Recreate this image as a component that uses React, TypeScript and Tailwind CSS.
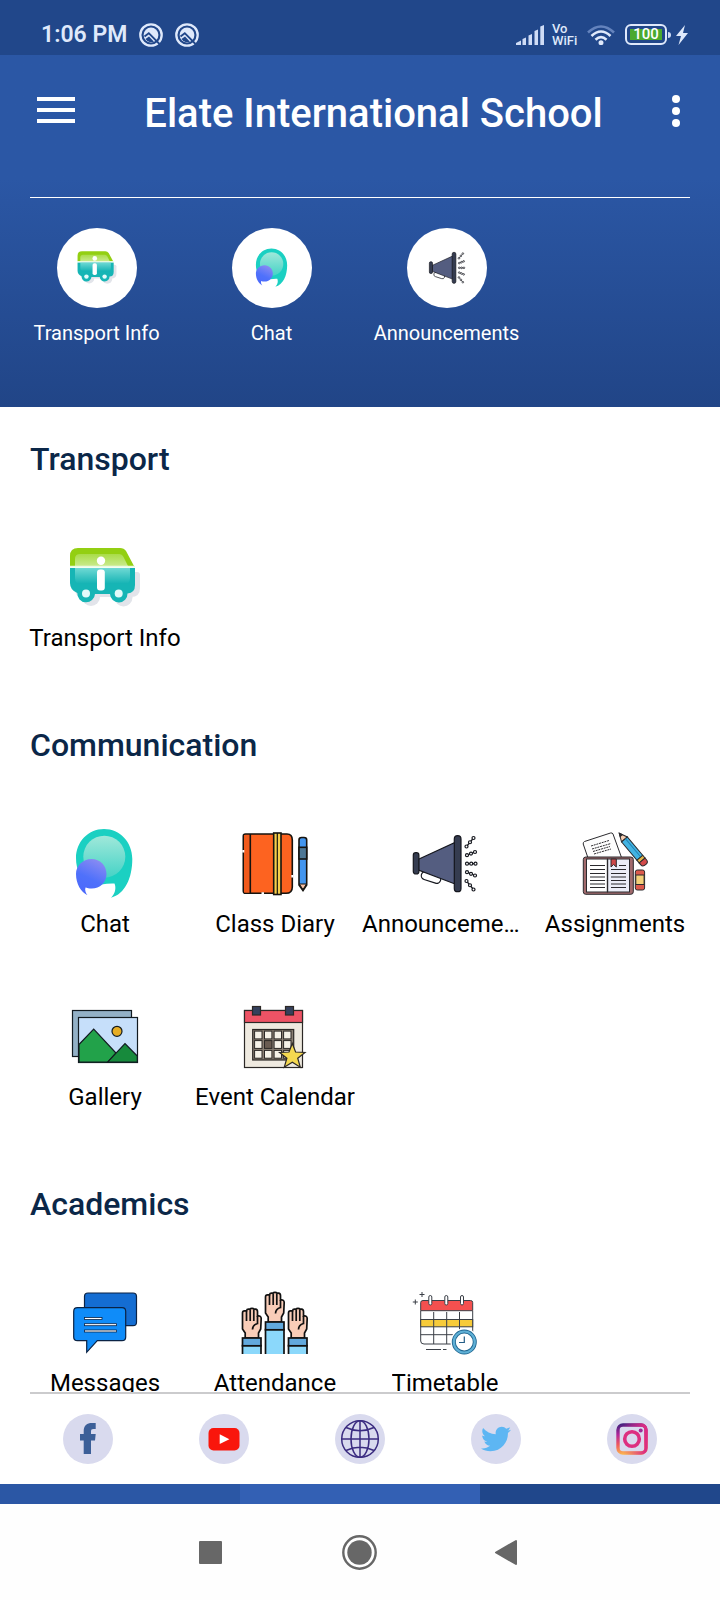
import type { ReactNode } from "react";
import { FaTwitter } from "react-icons/fa";

type Tile = {
  label: string;
  icon: ReactNode;
};

function BusIcon() {
  return (
    <svg viewBox="0 0 72 72" className="size-full" aria-hidden="true">
      <defs>
        <linearGradient id="bus-low" x1="0" y1="0" x2="0" y2="1">
          <stop offset="0" stopColor="#6fd9d4" />
          <stop offset="1" stopColor="#14b3b4" />
        </linearGradient>
        <linearGradient id="bus-top" x1="0" y1="0" x2="0" y2="1">
          <stop offset="0" stopColor="#a9dc48" />
          <stop offset="1" stopColor="#c9ea8c" />
        </linearGradient>
      </defs>
      <g fill="#e2e4ea">
        <path d="M8 30H68Q71 30 71 33V46Q71 55 62 55H12Q6 54 6 47Z" />
        <circle cx="22" cy="55" r="9" />
        <circle cx="54.5" cy="55.5" r="9" />
      </g>
      <path d="M1 24V14Q1 6 9 6H51Q55 6 57 9L65 24Z" fill="#93cf12" />
      <path d="M6 24V17Q6 12 11 12H50Q53 12 54.5 15L59 24Z" fill="url(#bus-top)" />
      <path d="M1 26H66V43Q66 51 58.5 51.5A8.7 8.7 0 0 1 41 52H26A8.7 8.7 0 0 1 8.3 51Q1 48 1 41Z" fill="#16b5b5" />
      <path d="M6 26H61V36Q61 42 55 42H12Q6 42 6 36Z" fill="url(#bus-low)" />
      <path d="M1 24.7H66" stroke="#e9fbe4" strokeWidth="1.8" />
      <circle cx="17" cy="51.5" r="4" fill="#e2fafa" />
      <circle cx="49.7" cy="51.5" r="4" fill="#e2fafa" />
      <circle cx="32" cy="18.7" r="4.2" fill="#fff" />
      <rect x="28" y="27.5" width="7.8" height="21" rx="3" fill="#fff" />
    </svg>
  );
}

function ChatIcon() {
  return (
    <svg viewBox="0 0 72 72" className="size-full" aria-hidden="true">
      <defs>
        <linearGradient id="chat-in" x1="0" y1="0" x2="0" y2="1">
          <stop offset="0" stopColor="#a0e8da" />
          <stop offset="1" stopColor="#45d3c6" />
        </linearGradient>
        <linearGradient id="chat-dot" x1="0.7" y1="0" x2="0.3" y2="1">
          <stop offset="0" stopColor="#8b8cf2" />
          <stop offset="0.55" stopColor="#4f71fb" />
          <stop offset="1" stopColor="#4a68fb" />
        </linearGradient>
      </defs>
      <path d="M35 1C51 1 63.3 14 63.3 31C63.3 50 56 66 42 69.7C46 66 47.5 60 45.5 55.5C38 55 30 57 20 59C12 52 7 42 7 30C7 14 19 1 35 1Z" fill="#1bd0c2" />
      <circle cx="35.3" cy="28.7" r="21" fill="url(#chat-in)" />
      <path d="M22.7 31C31 31 37.5 37.5 37.5 46C37.5 54.5 31 60.5 22.7 60.5C20 60.5 18 60 16.5 59.5C15.5 62.5 17 65.5 18.5 67.3C12 64 7 56 7 46C7 38 13.5 31 22.7 31Z" fill="url(#chat-dot)" />
    </svg>
  );
}

function DiaryIcon() {
  return (
    <svg viewBox="0 0 72 72" className="size-full" aria-hidden="true" stroke="#15130f" strokeWidth="1.6">
      <path d="M6.5 6H48Q53.3 6 53.3 12V59Q53.3 65.3 47 65.3H6.5Q4.3 65.3 4.3 63V8Q4.3 6 6.5 6Z" fill="#fd6320" />
      <path d="M5 7H11.3V64.5H5Z" fill="#f15a1c" stroke="none" />
      <path d="M11.3 6V65" />
      <rect x="34.7" y="5" width="7.3" height="61.5" fill="#f6cf4b" />
      <path d="M38.3 5V66" strokeWidth="1.2" />
      <path d="M4.3 22V24.5M53.3 47V49.5M22.5 65.3H25" stroke="#fff" strokeWidth="2" />
      <path d="M60 57V12Q60 9.5 62.5 9.5H65Q67.7 9.5 67.7 12V57L64 62.5Z" fill="#4295ee" />
      <rect x="60" y="19.3" width="7.7" height="11.7" fill="#4d7795" />
      <path d="M60.3 56H67.4L64 61.5Z" fill="#f8c2a6" strokeWidth="1" />
    </svg>
  );
}

// Each sound ray is a chain of three beads, given by its two end points.
const rays = [
  [57.5, 18.5, 64.5, 10],
  [58, 27.2, 66, 24],
  [58, 35.7, 66.5, 35.7],
  [58, 44.2, 66, 47.5],
  [57.5, 53, 64.5, 61.5],
];

function MegaphoneIcon() {
  return (
    <svg viewBox="0 0 72 72" className="size-full" aria-hidden="true" stroke="#15171e" strokeWidth="1.2">
      <rect x="12" y="45.5" width="20" height="8" rx="4" fill="#fff" transform="rotate(18 22 49.5)" />
      <path d="M9.5 31.3L46 14.5V56L9.5 42Z" fill="#545d80" />
      <rect x="4.3" y="24.7" width="5.6" height="21.3" rx="2.5" fill="#353c50" />
      <rect x="45.3" y="7.7" width="6.7" height="56" rx="3.3" fill="#353c50" />
      {rays.map(([x1, y1, x2, y2]) => (
        <g key={y1} fill="#fff" strokeWidth="1.2">
          <path d={`M${x1} ${y1}L${x2} ${y2}`} />
          <circle cx={x1} cy={y1} r="1.5" />
          <circle cx={(x1 + x2) / 2} cy={(y1 + y2) / 2} r="1.5" />
          <circle cx={x2} cy={y2} r="1.5" />
        </g>
      ))}
    </svg>
  );
}

function AssignmentsIcon() {
  return (
    <svg viewBox="0 0 72 72" className="size-full" aria-hidden="true" stroke="#2b2a2e" strokeWidth="1">
      <path d="M5.5 13.5L31.5 5Q33.5 4.5 34 6L42.7 30H9L4.2 16Q4 14.2 5.5 13.5Z" fill="#fdfdfd" />
      <path d="M12 18L30 12.5M13 21L32 15.5M14 23.5L31 18.5M15 26L32 21" strokeDasharray="2 .8" strokeWidth="1" />
      <g transform="translate(40.3 5.3) rotate(50)">
        <path d="M0 0L8 -3.8V3.8Z" fill="#f7cdb0" />
        <path d="M0 0L3 -1.4V1.4Z" fill="#2b2a2e" />
        <rect x="8" y="-3.8" width="24" height="7.6" fill="#42b3e2" />
        <path d="M8 -1.2H32" stroke="#2182b4" />
        <rect x="32" y="-3.8" width="3.5" height="7.6" fill="#e2b64a" />
        <path d="M35.5 -3.8H38Q41 -3.8 41 0T38 3.8H35.5Z" fill="#d34a4a" />
      </g>
      <rect x="4.3" y="29" width="50" height="37.3" rx="2.5" fill="#a16a6c" />
      <rect x="7.5" y="31" width="21" height="33" fill="#fff" />
      <rect x="28.5" y="31" width="22" height="33" fill="#eceef8" />
      <path d="M28.5 31V64" strokeWidth="1.4" />
      <path d="M11 37.5H26M11 41.5H26M11 45.5H26M11 49H26M11 52.5H26M11 56H26M11 59.5H26" />
      <path d="M32 41.5H47M32 45.5H47M32 49H47M32 52.5H47M32 56H47M32 59.5H47M40 37.5H47" />
      <path d="M32 31H37.3V39L34.6 36.5L32 39Z" fill="#d04848" />
      <rect x="56.3" y="42" width="9.3" height="20" rx="2" fill="#dc5a4c" />
      <rect x="56.8" y="47" width="8.3" height="9.5" fill="#f4cf78" />
    </svg>
  );
}

function GalleryIcon() {
  return (
    <svg viewBox="0 0 72 72" className="size-full" aria-hidden="true" stroke="#111a20" strokeWidth="1.2">
      <rect x="3.5" y="9.5" width="59" height="46" fill="#93b1c7" />
      <rect x="9.5" y="16.500" width="59" height="45" fill="#c6dffa" />
      <circle cx="48" cy="30.3" r="5" fill="#e6ad24" />
      <path d="M10 43.5L24.7 28.2L47 52L39 61.2H10Z" fill="#22a24a" />
      <path d="M38.5 61.2L56 42.5L68.3 55V61.2Z" fill="#178a3c" />
    </svg>
  );
}

function CalendarIcon() {
  return (
    <svg viewBox="0 0 72 72" className="size-full" aria-hidden="true" stroke="#2c2826" strokeWidth="1.2">
      <rect x="5.5" y="9.5" width="58" height="57" fill="#efeae0" />
      <rect x="5.5" y="9.5" width="58" height="12" fill="#ee5365" />
      <rect x="13.5" y="5.5" width="8" height="8.5" fill="#35405c" />
      <rect x="46.5" y="5.5" width="8" height="8.5" fill="#35405c" />
      <rect x="13.7" y="28.5" width="41" height="30.5" fill="#8a7f73" />
      {[34, 43.5, 53.3].map((y, row) =>
        [19.3, 29.2, 38.8, 48.3].map((x, col) => (
          <rect
            key={`${x}-${y}`}
            x={x - 3.7}
            y={y - 3.9}
            width="7.4"
            height="7.8"
            strokeWidth="1"
            fill={row === 1 && col === 1 ? "#6a5c52" : "#f6f2e8"}
          />
        )),
      )}
      <path d="M53.3 42.5L56.6 51L66 51.5L58.7 57.2L61.3 66.2L53.3 61.2L45.3 66.2L47.9 57.2L40.6 51.5L50 51Z" fill="#f4d850" />
    </svg>
  );
}

function MessagesIcon() {
  return (
    <svg viewBox="0 0 72 72" className="size-full" aria-hidden="true" stroke="#0b2345" strokeWidth="1.2">
      <rect x="15.5" y="6" width="52" height="32.7" rx="3.5" fill="#146dd2" />
      <path d="M8.5 20.7H53Q56.7 20.7 56.7 24.5V50Q56.7 53.7 53 53.7H28.3L17.7 65.3V53.7H8.5Q4.7 53.7 4.7 50V24.5Q4.7 20.7 8.5 20.7Z" fill="#0f8cf9" />
      <g fill="#fff" strokeWidth="0.8">
        <rect x="15.5" y="30.5" width="17.5" height="2" />
        <rect x="15.5" y="36.7" width="32" height="2" />
        <rect x="15.5" y="43" width="32" height="2" />
      </g>
    </svg>
  );
}

function Arm({ x, y }: { x: number; y: number }) {
  return (
    <g transform={`translate(${x} ${y})`}>
      <path d="M0.5 5Q0.5 2.8 2.5 2.8H4.5Q4.8 1.2 6.5 1.2H8Q8.5 0.3 10 0.3T12 1.2H13.5Q15.5 1.4 15.5 3.5V8Q19.2 7.5 19.2 10.5L18.7 21L16.5 25V30H3.2V25L0.5 21Z" fill="#f9cdb8" />
      <path d="M4.5 3V13M8.2 1.5V13M11.8 1.5V13M15.5 8V15.5Q10.5 17 10.5 21.500" fill="none" />
      <path d="M0.5 67V37.5H19V67" fill="#8bd8fb" />
      <rect x="0.5" y="30" width="18.5" height="7.8" fill="#62a9dd" />
    </g>
  );
}

function AttendanceIcon() {
  return (
    <svg viewBox="0 0 72 72" className="size-full" aria-hidden="true">
      <defs>
        <clipPath id="arms">
          <rect width="72" height="67" />
        </clipPath>
      </defs>
      <g clipPath="url(#arms)" stroke="#111" strokeWidth="1.7">
        <Arm x={3} y={21} />
        <Arm x={26} y={5} />
        <Arm x={49} y={21} />
      </g>
    </svg>
  );
}

function TimetableIcon() {
  return (
    <svg viewBox="0 0 72 72" className="size-full" aria-hidden="true" stroke="#3a3f47" strokeWidth="1">
      <path d="M11.7 24V54Q11.7 57 15 57H63.7V24" fill="#fff" />
      <rect x="11.7" y="32.5" width="52" height="7.3" fill="#f7cb39" />
      <path d="M24.7 25V57M37.7 25V57M50.5 25V57M11.7 47.7H63.7" />
      <path d="M11.7 23.7V15.5Q11.7 13.5 14 13.5H61.5Q63.7 13.5 63.7 15.5V23.7Z" fill="#f4504f" />
      {[21.3, 37.3, 53].map((x) => (
        <rect key={x} x={x - 1.5} y="8.5" width="3" height="9.5" rx="1.5" fill="#fff" />
      ))}
      <path d="M13 5V10M10.5 7.5H15.5M6.3 12.5V17.5M3.8 15H8.8" />
      <path d="M17 62.5H32M34 62.5H37.5" />
      <circle cx="55.3" cy="55" r="13.8" fill="#fff" stroke="none" />
      <circle cx="55.3" cy="55" r="10.5" fill="#fff" stroke="#1f6691" strokeWidth="4" />
      <circle cx="55.3" cy="55" r="10.5" fill="none" stroke="#5fb0d6" strokeWidth="2.2" />
      <path d="M55.3 49.5V55.5H50" fill="none" stroke="#235d86" strokeWidth="1.2" />
    </svg>
  );
}

const shortcuts: Tile[] = [
  { label: "Transport Info", icon: <BusIcon /> },
  { label: "Chat", icon: <ChatIcon /> },
  { label: "Announcements", icon: <MegaphoneIcon /> },
];

const sections: { title: string; tiles: Tile[] }[] = [
  {
    title: "Transport",
    tiles: [{ label: "Transport Info", icon: <BusIcon /> }],
  },
  {
    title: "Communication",
    tiles: [
      { label: "Chat", icon: <ChatIcon /> },
      { label: "Class Diary", icon: <DiaryIcon /> },
      { label: "Announcements", icon: <MegaphoneIcon /> },
      { label: "Assignments", icon: <AssignmentsIcon /> },
      { label: "Gallery", icon: <GalleryIcon /> },
      { label: "Event Calendar", icon: <CalendarIcon /> },
    ],
  },
  {
    title: "Academics",
    tiles: [
      { label: "Messages", icon: <MessagesIcon /> },
      { label: "Attendance", icon: <AttendanceIcon /> },
      { label: "Timetable", icon: <TimetableIcon /> },
    ],
  },
];

const socials: Tile[] = [
  {
    label: "Facebook",
    icon: (
      <svg viewBox="0 0 50 50" className="size-full" aria-hidden="true">
        <path d="M20.7 40V26.5H17V20H20.7V17C20.7 11.5 24 9 29 9H32.7V15H30.5C28.5 15 28 15.8 28 17.5V20H32.7L32 26.5H28V40Z" fill="#3c5f98" />
      </svg>
    ),
  },
  {
    label: "YouTube",
    icon: (
      <svg viewBox="0 0 50 50" className="size-full" aria-hidden="true">
        <rect x="9.5" y="14" width="31" height="22.5" rx="5" fill="#f9160c" />
        <path d="M20.7 20.3V30L30.4 25.2Z" fill="#fff" />
      </svg>
    ),
  },
  {
    label: "Website",
    icon: (
      <svg viewBox="0 0 50 50" className="size-full" aria-hidden="true" fill="none" stroke="#3b2c80" strokeWidth="1.5">
        <circle cx="25" cy="25" r="18.3" />
        <ellipse cx="25" cy="25" rx="9" ry="18.3" />
        <path d="M25 6.7V43.3M6.7 25H43.3M11 13.5Q25 20 39 13.5M11 36.5Q25 30 39 36.5" />
      </svg>
    ),
  },
  {
    label: "Twitter",
    icon: <FaTwitter className="size-[30px] text-[#5db6f3]" aria-hidden="true" />,
  },
  {
    label: "Instagram",
    icon: (
      <svg viewBox="0 0 50 50" className="size-full" aria-hidden="true" fill="none">
        <defs>
          <linearGradient id="ig" gradientUnits="userSpaceOnUse" x1="12" y1="9" x2="18" y2="41">
            <stop offset="0" stopColor="#33207a" />
            <stop offset="0.35" stopColor="#b3279a" />
            <stop offset="0.65" stopColor="#f05a5e" />
            <stop offset="1" stopColor="#fdc04e" />
          </linearGradient>
          <linearGradient id="ig-side" gradientUnits="userSpaceOnUse" x1="16" y1="0" x2="38" y2="0">
            <stop offset="0" stopColor="#d6248c" stopOpacity="0" />
            <stop offset="1" stopColor="#dc2d82" />
          </linearGradient>
        </defs>
        <rect x="11" y="11" width="28" height="28" rx="5" stroke="url(#ig)" strokeWidth="3.4" />
        <rect x="11" y="11" width="28" height="28" rx="5" stroke="url(#ig-side)" strokeWidth="3.4" />
        <circle cx="25" cy="25" r="7.3" stroke="#dd2f80" strokeWidth="3.6" />
        <circle cx="33.7" cy="16.5" r="2" fill="#a02a96" />
      </svg>
    ),
  },
];

function NotificationIcon() {
  return (
    <svg viewBox="0 0 24 24" className="size-6" aria-hidden="true">
      <circle cx="12" cy="12" r="10.7" fill="none" stroke="#dfe9fb" strokeWidth="2.3" />
      <circle cx="12" cy="12" r="7.4" fill="#dfe9fb" />
      <path d="M5.5 13.5L9.8 10.2L20.5 21" fill="none" stroke="#21478a" strokeWidth="1.9" />
      <path d="M6.5 16L10 13.5L15 18.8Q9 20 6.5 16Z" fill="#21478a" />
    </svg>
  );
}

function StatusBar() {
  return (
    <div className="flex h-[55px] items-center justify-between bg-[#21478a] pt-[14px] pr-8 pl-[41px] text-[#dfe9fb]">
      <div className="flex items-center gap-3">
        <span className="text-[23px] leading-8 font-semibold">1:06 PM</span>
        <NotificationIcon />
        <NotificationIcon />
      </div>
      <div className="flex items-center">
        <svg viewBox="0 0 28 20" className="h-5 w-7" fill="#cfdcf6" aria-hidden="true">
          <path d="M0 20V18L5 15.5V20ZM6.500 14L10 12.5V20H6.500ZM12.500 10.5L16 9V20H12.500ZM18.500 6L22 4.5V20H18.500ZM24.300 1.5L28 0V20H24.300Z" />
        </svg>
        <div className="ml-2 flex w-[26px] flex-col text-[13px] leading-[12px] font-medium">
          <span>Vo</span>
          <span>WiFi</span>
        </div>
        <svg viewBox="0 0 28 20" className="ml-[9px] h-5 w-7" fill="none" stroke="#dfe9fb" strokeWidth="2.6" aria-hidden="true">
          <path d="M1 7.5Q14 -4.5 27 7.5" stroke="#6483bd" />
          <path d="M4.500 11Q14 2 23.500 11" />
          <path d="M8.500 14.8Q14 9.500 19.500 14.8" />
          <circle cx="14" cy="17.7" r="1.2" />
        </svg>
        <div className="ml-[10px] flex h-[21px] w-[42px] items-center rounded-[6px] border-2 border-[#dfe9fb] p-[3px]">
          <div className="flex h-full w-full items-center justify-center bg-[#4aa92f] text-[15px] leading-[15px] font-medium text-white">
            100
          </div>
        </div>
        <div className="ml-px h-[6px] w-[3px] rounded-r-sm bg-[#cfdcf6]" />
        <svg viewBox="0 0 12 20" className="ml-[5px] h-5 w-3" fill="#dfe9fb" aria-hidden="true">
          <path d="M9 0L0 11H5L2.5 20L12 8H7Z" />
        </svg>
      </div>
    </div>
  );
}

function Header() {
  return (
    <header className="bg-linear-to-b from-[#2b57a5] from-35% to-[#214587] text-white">
      <div className="flex items-center pt-[29px] pr-10 pl-[37px]">
        <button type="button" aria-label="Menu" className="shrink-0">
          <svg viewBox="0 0 38 28" className="block h-7 w-[38px]" fill="#fff" aria-hidden="true">
            <path d="M0 0H38V4H0ZM0 11H38V15H0ZM0 22H38V26H0Z" />
          </svg>
        </button>
        <h1 className="min-w-0 flex-1 truncate pt-[6px] text-center text-[40px] leading-[48px] font-medium">
          Elate International School
        </h1>
        <button type="button" aria-label="More options" className="shrink-0">
          <svg viewBox="0 0 8 32" className="block h-8 w-2" fill="#fff" aria-hidden="true">
            <circle cx="4" cy="4" r="4" />
            <circle cx="4" cy="16" r="4" />
            <circle cx="4" cy="28" r="4" />
          </svg>
        </button>
      </div>
      <hr className="mx-[30px] mt-[59px] border-t border-white" />
      <nav className="grid grid-cols-4 pt-[30px] pr-[11px] pb-[62px] pl-[9px]">
        {shortcuts.map(({ label, icon }) => (
          <button key={label} type="button" className="flex flex-col items-center">
            <span className="flex size-20 items-center justify-center rounded-full bg-white">
              <span className="size-10">{icon}</span>
            </span>
            <span className="mt-[13px] text-[20px] leading-6">{label}</span>
          </button>
        ))}
      </nav>
    </header>
  );
}

function Section({ title, tiles }: { title: string; tiles: Tile[] }) {
  return (
    <section>
      <h2 className="px-[30px] text-[32px] leading-10 font-medium text-[#0b2748]">{title}</h2>
      <div className="mt-[63px] grid grid-cols-4 gap-y-[61px] px-5">
        {tiles.map(({ label, icon }) => (
          <button key={label} type="button" className="flex min-w-0 flex-col items-center px-[2px]">
            <span className="size-[72px]">{icon}</span>
            <span className="mt-2 max-w-full truncate text-[24px] leading-8 text-black">{label}</span>
          </button>
        ))}
      </div>
    </section>
  );
}

export default function App() {
  return (
    <div className="flex h-screen flex-col overflow-hidden bg-white font-['Roboto',sans-serif]">
      <StatusBar />
      <Header />
      <main className="flex min-h-0 flex-1 flex-col gap-[71px] overflow-y-auto pt-8 [scrollbar-width:none]">
        {sections.map((section) => (
          <Section key={section.title} title={section.title} tiles={section.tiles} />
        ))}
      </main>
      <footer>
        <hr className="mx-[30px] border-t-2 border-[#cbcbcd]" />
        <div className="grid grid-cols-5 justify-items-center px-5 py-5">
          {socials.map(({ label, icon }) => (
            <a
              key={label}
              href="#"
              aria-label={label}
              className="flex size-[50px] items-center justify-center rounded-full bg-[#d9daee]"
            >
              {icon}
            </a>
          ))}
        </div>
        <div className="grid h-5 grid-cols-3">
          <div className="bg-[#2b57a5]" />
          <div className="bg-[#3360b4]" />
          <div className="bg-[#20478b]" />
        </div>
        <div className="flex h-24 items-center justify-center gap-28 bg-[#fefefe]">
          <button type="button" aria-label="Recent apps">
            <svg viewBox="0 0 36 36" className="block size-9" fill="#676767" aria-hidden="true">
              <rect x="5" y="7" width="23" height="23" rx="1" />
            </svg>
          </button>
          <button type="button" aria-label="Home">
            <svg viewBox="0 0 36 36" className="block size-9" aria-hidden="true">
              <circle cx="17.5" cy="18.5" r="16.2" fill="none" stroke="#676767" strokeWidth="2.4" />
              <circle cx="17.5" cy="18.5" r="12.2" fill="#676767" />
            </svg>
          </button>
          <button type="button" aria-label="Back">
            <svg viewBox="0 0 36 36" className="block size-9" fill="#676767" stroke="#676767" strokeWidth="2" strokeLinejoin="round" aria-hidden="true">
              <path d="M6 18.5L26 7V30Z" />
            </svg>
          </button>
        </div>
      </footer>
    </div>
  );
}
